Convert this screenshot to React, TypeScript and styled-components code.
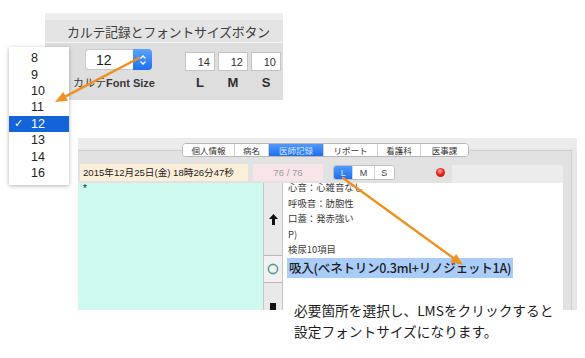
import React from "react";
import styled, { createGlobalStyle } from "styled-components";

const GlobalStyle = createGlobalStyle`
  html, body { margin: 0; padding: 0; background: #ffffff; }
  body { font-family: "Liberation Sans", "Noto Sans CJK JP", sans-serif; color: #222; }
`;

const Canvas = styled.div`
  position: relative;
  width: 585px;
  height: 358px;
  overflow: hidden;
  background: #ffffff;
`;

/* ---------- top screenshot: settings panel ---------- */
const TopPanel = styled.section`
  position: absolute;
  left: 45px;
  top: 13px;
  width: 238px;
  height: 87px;
  background: #dedede;
  display: flex;
  flex-direction: column;
`;

const PanelHeader = styled.div`
  height: 22px;
  padding-top: 7px;
  padding-left: 22px;
  display: flex;
  align-items: center;
  background: linear-gradient(#eeeeee 0 7px, #e4e4e4 7px);
  border-bottom: 1px solid #f4f4f4;
  font-family: "Noto Sans CJK JP", sans-serif;
  font-size: 13px;
  letter-spacing: -0.3px;
  color: #3e3e3e;
`;

const PanelBody = styled.div`
  flex: 1;
  display: flex;
  align-items: flex-start;
  padding-top: 6px;
`;

const SizeGroup = styled.div`
  margin-left: 28px;
  width: 82px;
  display: flex;
  flex-direction: column;
  align-items: flex-start;
`;

const Stepper = styled.div`
  margin-left: 12px;
  width: 67px;
  height: 21px;
  display: flex;
`;

const StepperValue = styled.div`
  flex: 1;
  background: #ffffff;
  border: 1px solid #c9c9c9;
  border-right: none;
  border-radius: 4px 0 0 4px;
  padding-left: 10px;
  display: flex;
  align-items: center;
  font-size: 14px;
  color: #1e1e1e;
`;

const StepperArrows = styled.div`
  width: 19px;
  border-radius: 0 4px 4px 0;
  background: linear-gradient(#5aa4fa, #1d6ff0);
  display: flex;
  align-items: center;
  justify-content: center;
`;

const GroupLabel = styled.div`
  margin-top: 6px;
  width: 100%;
  text-align: center;
  font-size: 11px;
  line-height: 14px;
  font-weight: 700;
  color: #3a3a3a;
  white-space: nowrap;
`;

const LabelKana = styled.span`
  font-weight: 400;
`;

const LmsGroup = styled.div`
  margin-left: 30px;
  margin-top: 3px;
  display: flex;
  flex-direction: column;
`;

const BoxRow = styled.div`
  display: flex;
  gap: 3px;
`;

const NumBox = styled.div`
  width: 30px;
  height: 19px;
  box-sizing: border-box;
  background: #ffffff;
  border: 1px solid #c4c4c4;
  padding-right: 4px;
  display: flex;
  align-items: center;
  justify-content: flex-end;
  font-size: 11px;
  color: #333;
`;

const LetterRow = styled.div`
  margin-top: 5px;
  display: flex;
  gap: 3px;
`;

const Letter = styled.div`
  width: 30px;
  text-align: center;
  font-size: 13px;
  line-height: 14px;
  font-weight: 700;
  color: #2e2e2e;
`;

/* ---------- popup menu ---------- */
const Popup = styled.ul`
  position: absolute;
  left: 9px;
  top: 47px;
  width: 60px;
  height: 138px;
  margin: 0;
  padding: 3px 0 0;
  list-style: none;
  box-sizing: border-box;
  background: #ffffff;
  box-shadow: 0 1px 4px rgba(0, 0, 0, 0.3);
`;

const PopupItem = styled.li<{ $active?: boolean }>`
  position: relative;
  height: 16.4px;
  padding-left: 22px;
  display: flex;
  align-items: center;
  font-size: 12.5px;
  color: ${(p) => (p.$active ? "#ffffff" : "#222")};
  background: ${(p) => (p.$active ? "#1463d8" : "transparent")};
`;

const Check = styled.span`
  position: absolute;
  left: 5px;
  font-family: "DejaVu Sans", sans-serif;
  font-size: 11px;
  font-weight: 700;
`;

/* ---------- bottom screenshot: record window ---------- */
const RecordPanel = styled.section`
  position: absolute;
  left: 78px;
  top: 138px;
  width: 499px;
  height: 172px;
  overflow: hidden;
  background: linear-gradient(#ececec 0 10px, #e7e7e7 10px);
  display: flex;
  flex-direction: column;
  padding-top: 5px;
  box-sizing: border-box;
`;

const TabBar = styled.div`
  position: relative;
  z-index: 1;
  align-self: flex-start;
  margin-left: 104px;
  height: 12px;
  display: flex;
  background: #ffffff;
  border: 1px solid #b7b7b7;
  border-radius: 4px;
  overflow: hidden;
  font-family: "Noto Sans CJK JP", sans-serif;
  font-size: 8.5px;
`;

const Tab = styled.div<{ $w: number; $active?: boolean }>`
  width: ${(p) => p.$w}px;
  display: flex;
  align-items: center;
  justify-content: center;
  border-left: 1px solid #cfcfcf;
  color: ${(p) => (p.$active ? "#cfe2ff" : "#333")};
  background: ${(p) => (p.$active ? "linear-gradient(#4f9afa, #1f6ef0)" : "#fff")};
  &:first-child { border-left: none; }
`;

const TabBox = styled.div`
  margin-top: -7px;
  margin-right: 5px;
  flex: 1;
  display: flex;
  flex-direction: column;
  background: #e2e2e2;
  border-top: 1px solid #d0d0d0;
  border-right: 1px solid #d0d0d0;
  padding: 11px 8px 0 0;
  min-height: 0;
`;

const InfoRow = styled.div`
  height: 21px;
  display: flex;
  align-items: center;
`;

const DateField = styled.div`
  margin-left: 2px;
  width: 168px;
  height: 17px;
  box-sizing: border-box;
  padding-left: 3px;
  background: #fcefd9;
  font-size: 9.6px;
  line-height: 17px;
  color: #222;
  white-space: nowrap;
`;

const CountField = styled.div`
  margin-left: 5px;
  width: 70px;
  height: 17px;
  background: #f7e5e9;
  font-size: 9.6px;
  line-height: 17px;
  text-align: center;
  color: #9c9c9c;
`;

const Segmented = styled.div`
  margin-left: 10px;
  width: 62px;
  height: 15px;
  box-sizing: border-box;
  display: flex;
  background: #ffffff;
  border: 1px solid #bfbfbf;
  border-radius: 3px;
  overflow: hidden;
  font-size: 9px;
`;

const Segment = styled.div<{ $w: number; $active?: boolean }>`
  width: ${(p) => p.$w}px;
  display: flex;
  align-items: center;
  justify-content: center;
  border-left: 1px solid #d4d4d4;
  color: ${(p) => (p.$active ? "#d8e8ff" : "#444")};
  background: ${(p) => (p.$active ? "linear-gradient(#4f9afa, #1f6ef0)" : "#fff")};
  &:first-child { border-left: none; }
`;

const RedDot = styled.div`
  margin-left: 41px;
  width: 9px;
  height: 9px;
  border-radius: 50%;
  background: radial-gradient(circle at 45% 35%, #ff8a80 0 15%, #e8241c 45%, #b3120c 100%);
`;

const GrayField = styled.div`
  margin-left: 7px;
  width: 111px;
  height: 20px;
  align-self: flex-end;
  margin-bottom: -2px;
  background: #ececec;
`;

const ContentRow = styled.div`
  flex: 1;
  display: flex;
  min-height: 0;
`;

const MintPane = styled.div`
  width: 185px;
  box-sizing: border-box;
  padding: 0 5px;
  background: #cdf9ef;
  font-size: 10px;
  line-height: 12px;
`;

const ToolColumn = styled.div`
  width: 20px;
  box-sizing: border-box;
  border-left: 1px solid #c6c6c6;
  border-right: 1px solid #c6c6c6;
  background: #e9e9e9;
  display: flex;
  flex-direction: column;
`;

const ToolSlot = styled.div<{ $h?: number; $boxed?: boolean; $end?: boolean }>`
  height: ${(p) => (p.$h ? `${p.$h}px` : "auto")};
  flex: ${(p) => (p.$h ? "none" : "1")};
  display: flex;
  justify-content: center;
  align-items: ${(p) => (p.$end ? "flex-end" : "center")};
  box-sizing: border-box;
  background: ${(p) => (p.$boxed ? "#f1f1f1" : "transparent")};
  border-top: ${(p) => (p.$boxed ? "1px solid #b9b9b9" : "none")};
  border-bottom: ${(p) => (p.$boxed ? "1px solid #b9b9b9" : "none")};
`;

const TextPane = styled.div`
  flex: 1;
  background: #ffffff;
  padding-left: 5px;
  font-family: "Noto Sans CJK JP", sans-serif;
  color: #3a3a3a;
`;

const TextBody = styled.div`
  margin-top: -3px;
`;

const TextLine = styled.div<{ $big?: boolean }>`
  font-size: ${(p) => (p.$big ? "12.5px" : "9.4px")};
  line-height: ${(p) => (p.$big ? "20px" : "15.5px")};
  font-weight: ${(p) => (p.$big ? 500 : 400)};
  color: ${(p) => (p.$big ? "#1e1e1e" : "#3a3a3a")};
  white-space: nowrap;
`;

const Highlight = styled.span`
  display: inline-block;
  background: #a9cdf8;
  padding: 0 2px 0 2px;
  margin-left: -1px;
  letter-spacing: -0.2px;
`;

/* ---------- caption & arrows ---------- */
const Caption = styled.p`
  position: absolute;
  left: 294px;
  top: 300px;
  margin: 0;
  font-family: "Noto Sans CJK JP", sans-serif;
  font-size: 13.7px;
  line-height: 21px;
  color: #1c1c1c;
`;

const ArrowLayer = styled.svg`
  position: absolute;
  left: 0;
  top: 0;
  pointer-events: none;
`;

const tabs = [
  { label: "個人情報", w: 51 },
  { label: "病名", w: 33 },
  { label: "医師記録", w: 54, active: true },
  { label: "リポート", w: 53 },
  { label: "看護科", w: 42 },
  { label: "医事課", w: 47 },
];

const sizes = [8, 9, 10, 11, 12, 13, 14, 16];

export default function App() {
  return (
    <>
      <GlobalStyle />
      <Canvas>
        <TopPanel>
          <PanelHeader>カルテ記録とフォントサイズボタン</PanelHeader>
          <PanelBody>
            <SizeGroup>
              <Stepper>
                <StepperValue>12</StepperValue>
                <StepperArrows>
                  <svg width="8" height="12" viewBox="0 0 8 12">
                    <path d="M1.5 4.5 L4 2 L6.5 4.5 M1.5 7.5 L4 10 L6.5 7.5" fill="none" stroke="#fff" strokeWidth="1.3" />
                  </svg>
                </StepperArrows>
              </Stepper>
              <GroupLabel>
                <LabelKana>カルテ</LabelKana>Font Size
              </GroupLabel>
            </SizeGroup>
            <LmsGroup>
              <BoxRow>
                <NumBox>14</NumBox>
                <NumBox>12</NumBox>
                <NumBox>10</NumBox>
              </BoxRow>
              <LetterRow>
                <Letter>L</Letter>
                <Letter>M</Letter>
                <Letter>S</Letter>
              </LetterRow>
            </LmsGroup>
          </PanelBody>
        </TopPanel>

        <Popup>
          {sizes.map((s) => (
            <PopupItem key={s} $active={s === 12}>
              {s === 12 && <Check>✓</Check>}
              {s}
            </PopupItem>
          ))}
        </Popup>

        <RecordPanel>
          <TabBar>
            {tabs.map((t) => (
              <Tab key={t.label} $w={t.w} $active={t.active}>
                {t.label}
              </Tab>
            ))}
          </TabBar>
          <TabBox>
            <InfoRow>
              <DateField>2015年12月25日(金) 18時26分47秒</DateField>
              <CountField>76 / 76</CountField>
              <Segmented>
                <Segment $w={19} $active>L</Segment>
                <Segment $w={21}>M</Segment>
                <Segment $w={20}>S</Segment>
              </Segmented>
              <RedDot />
              <GrayField />
            </InfoRow>
            <ContentRow>
              <MintPane>*</MintPane>
              <ToolColumn>
                <ToolSlot $h={72}>
                  <svg width="9" height="11" viewBox="0 0 9 11">
                    <path d="M4.5 0 L9 5 L6 5 L6 11 L3 11 L3 5 L0 5 Z" fill="#111" />
                  </svg>
                </ToolSlot>
                <ToolSlot $h={28} $boxed>
                  <svg width="12" height="12" viewBox="0 0 12 12">
                    <circle cx="6" cy="6" r="4.6" fill="none" stroke="#5e9a9a" strokeWidth="1.6" />
                  </svg>
                </ToolSlot>
                <ToolSlot $end>
                  <svg width="6" height="7" viewBox="0 0 6 7">
                    <rect x="0" y="0" width="6" height="7" fill="#111" />
                  </svg>
                </ToolSlot>
              </ToolColumn>
              <TextPane>
                <TextBody>
                  <TextLine>心音：心雑音なし</TextLine>
                  <TextLine>呼吸音：肪胞性</TextLine>
                  <TextLine>口蓋：発赤強い</TextLine>
                  <TextLine>P)</TextLine>
                  <TextLine>検尿10項目</TextLine>
                  <TextLine $big>
                    <Highlight>吸入(ベネトリン0.3ml+リノジェット1A)</Highlight>
                  </TextLine>
                </TextBody>
              </TextPane>
            </ContentRow>
          </TabBox>
        </RecordPanel>

        <Caption>
          必要箇所を選択し、LMSをクリックすると
          <br />
          設定フォントサイズになります。
        </Caption>

        <ArrowLayer width="585" height="358" viewBox="0 0 585 358">
          <line x1="139" y1="58" x2="65.6" y2="96.4" stroke="#f0901e" strokeWidth="2.4" strokeLinecap="round" />
          <polygon points="55,102 67.9,100.8 63.3,92" fill="#f0901e" />
          <line x1="343" y1="178" x2="453.3" y2="258" stroke="#f0901e" strokeWidth="2.4" strokeLinecap="round" />
          <polygon points="463,265 450.4,262 456.2,253.9" fill="#f0901e" />
        </ArrowLayer>
      </Canvas>
    </>
  );
}
